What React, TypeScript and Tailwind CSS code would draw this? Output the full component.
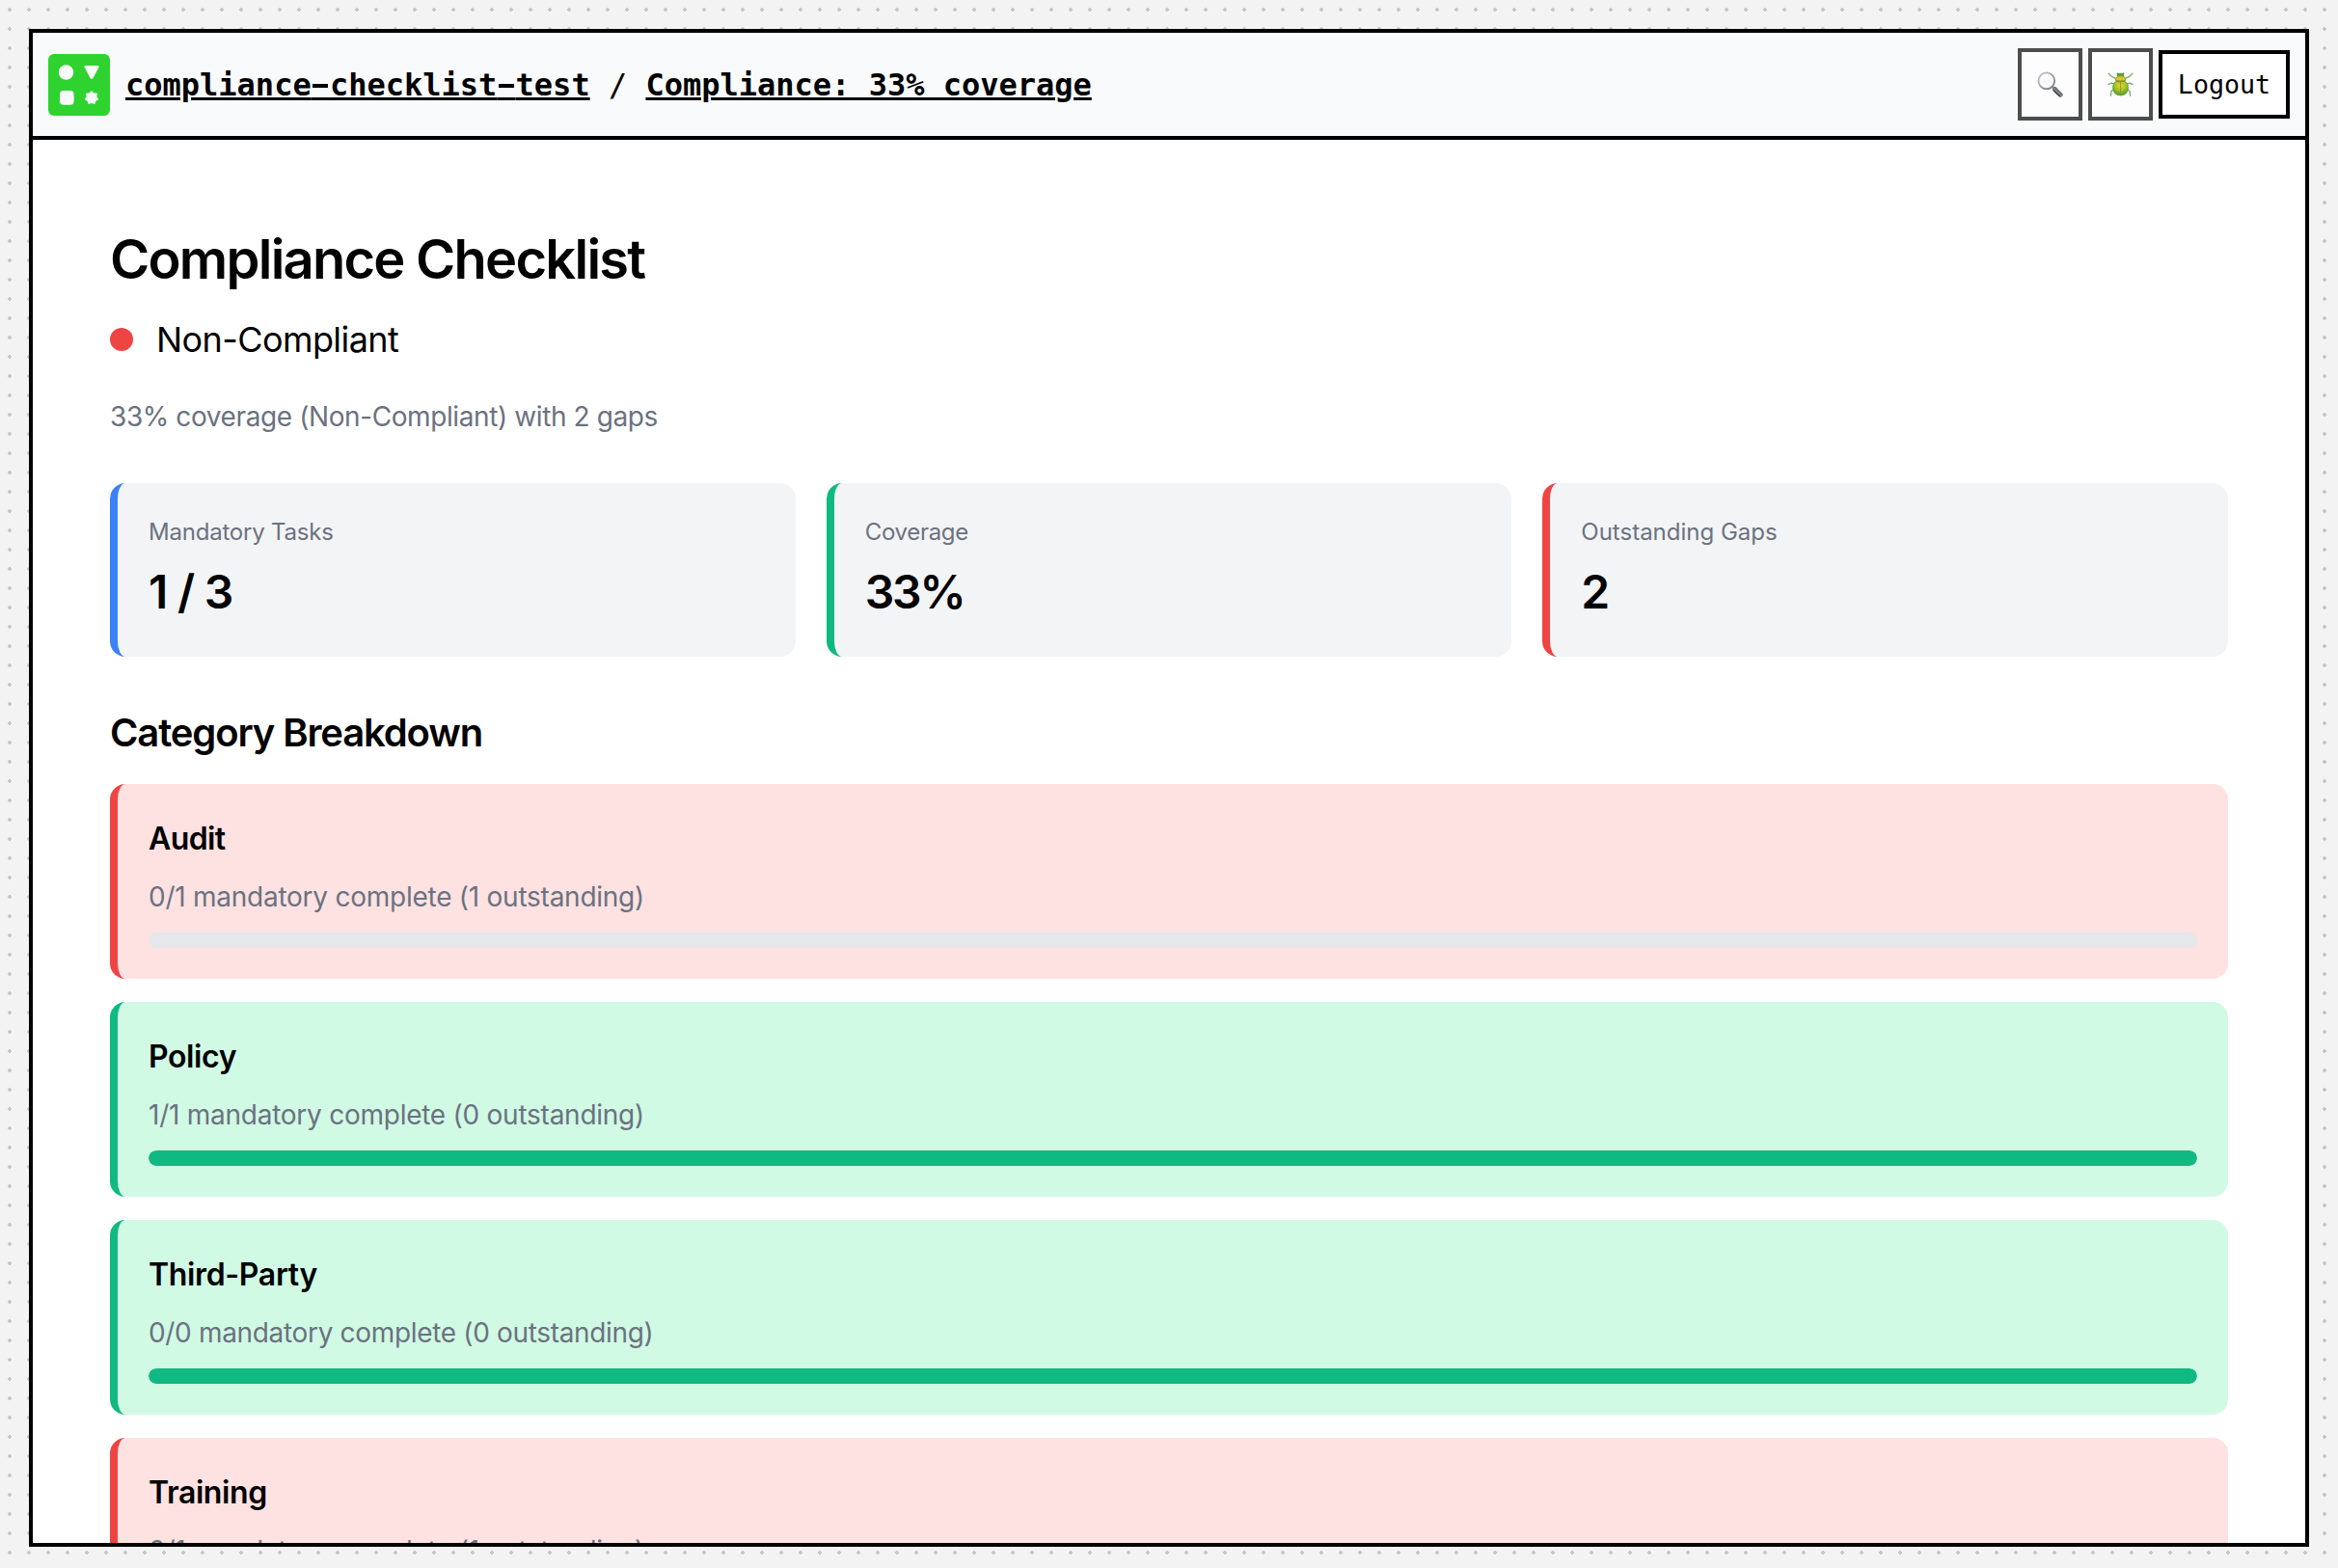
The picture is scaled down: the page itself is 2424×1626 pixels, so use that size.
import React from 'react';

type Tone = 'ok' | 'gap';

const stats = [
  { label: 'Mandatory Tasks', value: '1 / 3', border: 'border-[#3b82f6]', labelCls: 'tracking-[-0.22px]', valueCls: 'tracking-[-1.2px]' },
  { label: 'Coverage', value: '33%', border: 'border-[#10b981]', labelCls: 'tracking-[-0.3px]', valueCls: 'tracking-[-2.1px]' },
  { label: 'Outstanding Gaps', value: '2', border: 'border-[#ef4444]', labelCls: 'tracking-normal', valueCls: 'tracking-normal' },
];

const categories: { name: string; detail: string; tone: Tone; percent: number; nameCls: string; detailCls: string }[] = [
  { name: 'Audit', detail: '0/1 mandatory complete (1 outstanding)', tone: 'gap', percent: 0, nameCls: 'tracking-[-0.6px]', detailCls: 'tracking-[-0.25px]' },
  { name: 'Policy', detail: '1/1 mandatory complete (0 outstanding)', tone: 'ok', percent: 100, nameCls: 'tracking-[-0.4px]', detailCls: 'tracking-[-0.25px]' },
  { name: 'Third-Party', detail: '0/0 mandatory complete (0 outstanding)', tone: 'ok', percent: 100, nameCls: 'tracking-[-0.35px]', detailCls: 'tracking-[-0.33px]' },
  { name: 'Training', detail: '0/1 mandatory complete (1 outstanding)', tone: 'gap', percent: 0, nameCls: 'tracking-[-0.4px]', detailCls: 'tracking-[-0.25px]' },
];

const toneClass: Record<Tone, string> = {
  ok: 'border-[#10b981] bg-[#d1fae5]',
  gap: 'border-[#ef4444] bg-[#fee2e2]',
};

// Seven-lobed star, alternating between the outer and inner radius.
const starPoints = Array.from({ length: 14 }, (_, i) => {
  const radius = i % 2 === 0 ? 6.9 : 5;
  const angle = (i * Math.PI) / 7 - Math.PI / 2;
  return `${(45 + radius * Math.cos(angle)).toFixed(2)},${(45.4 + radius * Math.sin(angle)).toFixed(2)}`;
}).join(' ');

function Logo() {
  return (
    <svg viewBox="0 0 64 64" className="h-16 w-16 shrink-0">
      <rect width="64" height="64" rx="6" fill="#2fd32f" />
      <g fill="#f9fafc">
        <circle cx="18.5" cy="19" r="7.7" />
        <path d="M38.6 12h12.8q1.8 0 1 1.7l-6 11.2q-1.4 2.2-2.8 0l-6-11.2q-.8-1.7 1-1.7z" />
        <rect x="12" y="38" width="14.6" height="14.8" rx="3.8" />
        <polygon points={starPoints} stroke="#f9fafc" strokeWidth="1" strokeLinejoin="round" />
      </g>
    </svg>
  );
}

function MagnifierIcon() {
  return (
    <svg viewBox="0 0 27 27" className="h-[27px] w-[27px]" fill="none">
      <defs>
        <linearGradient id="ring" x1="0" y1="0" x2="1" y2="1">
          <stop offset="0" stopColor="#c3c8d2" />
          <stop offset="1" stopColor="#73777e" />
        </linearGradient>
        <linearGradient id="handle" x1="0" y1="1" x2="1" y2="0">
          <stop offset="0" stopColor="#3c3d40" />
          <stop offset=".5" stopColor="#85878b" />
          <stop offset="1" stopColor="#48494d" />
        </linearGradient>
      </defs>
      <path d="M16 16l3 3" stroke="#85878b" strokeWidth="2" />
      <path d="M18.2 18.2l6.2 6.2" stroke="url(#handle)" strokeWidth="4.6" strokeLinecap="round" />
      <path d="M17.2 20.2l6.2 5.6" stroke="#3f4043" strokeWidth="1.2" strokeLinecap="round" />
      <circle cx="9.8" cy="9.8" r="8.4" fill="#f7f8f9" stroke="url(#ring)" strokeWidth="1.8" />
      <path d="M4.8 8.2q1.4-3.6 5-4.2" stroke="#fff" strokeWidth="1.4" strokeLinecap="round" />
    </svg>
  );
}

function BeetleIcon() {
  return (
    <svg viewBox="0 0 27 27" className="h-[27px] w-[27px]" fill="none">
      <defs>
        <radialGradient id="shell" cx=".5" cy=".3" r=".7">
          <stop offset="0" stopColor="#e6d431" />
          <stop offset=".5" stopColor="#a9c42a" />
          <stop offset="1" stopColor="#4f9a2c" />
        </radialGradient>
      </defs>
      <g stroke="#7ba667" strokeWidth="1.3" strokeLinecap="round" strokeLinejoin="round">
        <path d="M8.6 7.4L4.4 5.4 1.2 2.2M18.4 7.4l4.2-2 3.2-3.2" />
        <path d="M6.4 12.6l-3-.4-2.4 1.4M20.6 12.6l3-.4 2.4 1.4" />
        <path d="M6.2 18.4L4 20.6l-.6 4.6M20.8 18.4l2.2 2.2.6 4.6" />
      </g>
      <path d="M11 3.4L10 1.6M16 3.4l1-1.8" stroke="#4f8f2e" strokeWidth="1.2" />
      <ellipse cx="13.5" cy="4.2" rx="3.6" ry="2.4" fill="#5d9b2a" />
      <path d="M8.2 9.4q.3-4.6 5.3-4.6t5.3 4.6q-5.3 2-10.6 0z" fill="#d9c52c" stroke="#6fa32b" strokeWidth=".9" />
      <path d="M13.5 10q7.6-.8 7.9 6.2.1 8.4-7.9 8.8-8-.4-7.9-8.8.3-7 7.9-6.2z" fill="url(#shell)" stroke="#5a9d2d" strokeWidth=".8" />
      <path d="M13.5 10.4v14" stroke="#87942a" strokeWidth=".8" />
      <path d="M8.6 10.2q4.9 1.5 9.8 0" stroke="#a8742a" strokeWidth=".8" />
    </svg>
  );
}

function IconButton({ label, children }: { label: string; children: React.ReactNode }) {
  return (
    <button
      aria-label={label}
      className="flex h-[75px] w-[67px] items-center justify-center border-4 border-[#4d4d4d] bg-[#fdfdfe]"
    >
      {children}
    </button>
  );
}

// A hyphen drawn with a wider bar than the font's own glyph.
function WideHyphen() {
  return (
    <span className="relative text-transparent after:absolute after:top-[18px] after:left-[1.5px] after:h-1 after:w-4 after:bg-black after:content-['']">
      -
    </span>
  );
}

function Header() {
  return (
    <header className="flex h-[111px] shrink-0 items-center border-b-4 border-black bg-[#f9fafc] px-4 font-['DejaVu_Sans_Mono',monospace]">
      <Logo />
      <nav className="ml-4 text-[32px] leading-10 whitespace-pre">
        <a className="font-bold underline decoration-black decoration-[3px] underline-offset-[2px]">
          compliance<WideHyphen />checklist<WideHyphen />test
        </a>
        <span> / </span>
        <a className="font-bold underline decoration-black decoration-[3px] underline-offset-[2px]">Compliance: 33% coverage</a>
      </nav>
      <div className="ml-auto flex items-center gap-1.5">
        <IconButton label="Search">
          <MagnifierIcon />
        </IconButton>
        <IconButton label="Report a bug">
          <BeetleIcon />
        </IconButton>
        <button className="h-[71px] w-[136px] border-4 border-black bg-white text-[26.67px]">Logout</button>
      </div>
    </header>
  );
}

export default function App() {
  return (
    <div className="flex h-[1626px] w-[2424px] flex-col overflow-hidden bg-[#f3f3f3] bg-[radial-gradient(circle,#c8c8c8_2px,transparent_2px)] bg-[size:20px_20px] px-[30px] pt-[30px] pb-[22px] text-black">
      <div className="flex min-h-0 flex-1 flex-col overflow-hidden border-4 border-black bg-white">
        <Header />
        <main className="flex flex-col px-20 pt-[92px] font-['Inter',sans-serif]">
          <h1 className="text-[56px] leading-[64px] font-semibold tracking-[-1.75px]">Compliance Checklist</h1>
          <div className="mt-[27px] flex items-center gap-6">
            <span className="h-6 w-6 rounded-full bg-[#ef4444]" />
            <span className="text-[36px] leading-[48px] tracking-[-0.58px]">Non-Compliant</span>
          </div>
          <p className="mt-9 text-[28px] leading-10 tracking-[-0.4px] text-[#6b7280]">
            33% coverage (Non-Compliant) with 2 gaps
          </p>

          <section className="mt-[49px] grid grid-cols-3 gap-8">
            {stats.map((s) => (
              <div key={s.label} className={`h-[180px] rounded-2xl border-l-8 bg-[#f3f4f6] px-8 pt-[35px] ${s.border}`}>
                <div className={`text-2xl leading-8 text-[#6b7280] ${s.labelCls}`}>{s.label}</div>
                <div className={`mt-[18px] text-[48px] leading-[56px] font-semibold ${s.valueCls}`}>{s.value}</div>
              </div>
            ))}
          </section>

          <h2 className="mt-[55px] text-[40px] leading-[48px] font-semibold tracking-[-1.13px]">Category Breakdown</h2>
          <section className="mt-[29px] flex flex-col gap-6">
            {categories.map((c) => (
              <article key={c.name} className={`h-[202px] rounded-2xl border-l-8 px-8 pt-[37px] ${toneClass[c.tone]}`}>
                <h3 className={`text-[32px] leading-10 font-semibold ${c.nameCls}`}>{c.name}</h3>
                <p className={`mt-5 text-[28px] leading-10 text-[#6b7280] ${c.detailCls}`}>{c.detail}</p>
                <div className="mt-[17px] h-4 overflow-hidden rounded-lg bg-[#e5e7eb]">
                  <div className="h-full rounded-lg bg-[#10b981]" style={{ width: `${c.percent}%` }} />
                </div>
              </article>
            ))}
          </section>
        </main>
      </div>
    </div>
  );
}
